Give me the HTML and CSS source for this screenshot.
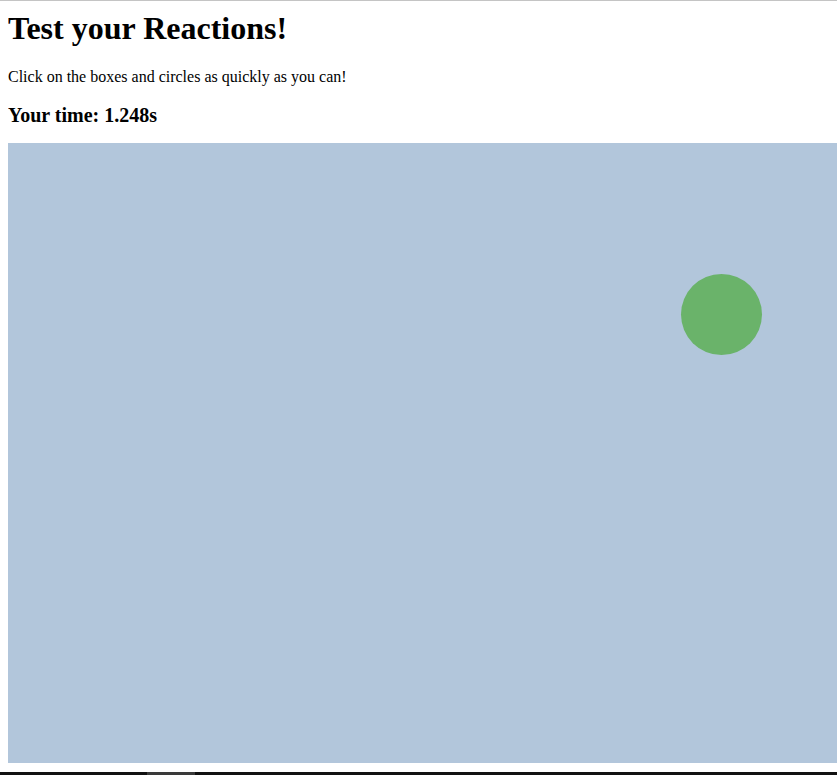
FILE: index.html
```html
<!DOCTYPE html>
<html>
<head>
<meta charset="utf-8">
<title>Test your Reactions!</title>
<link rel="stylesheet" href="styles.css">
</head>
<body>
<h1 class="title">Test your Reactions!</h1>
<p class="intro">Click on the boxes and circles as quickly as you can!</p>
<h3 class="time">Your time: <span class="time-value">1.248s</span></h3>
<div class="game-area">
  <div class="shape shape-circle" style="left: 673px; top: 131px;"></div>
</div>
<div class="bottom-bar"><div class="bottom-thumb"></div></div>
</body>
</html>
```
FILE: styles.css
```css
html {
  border-top: 1px solid #c4c4c4;
  background: #ffffff;
}
body {
  margin: 9px 0 8px 8px;
  font-family: "Liberation Serif", "Times New Roman", serif;
  color: #000;
}
.title {
  font-size: 32px;
  font-weight: bold;
  margin: 0 0 21px 0;
}
.intro {
  font-size: 16px;
  margin: 16px 0;
}
.time {
  font-size: 20px;
  font-weight: bold;
  margin: 18px 0 16px 0;
}
.game-area {
  position: relative;
  height: 620px;
  background: #b2c6db;
}
.shape {
  position: absolute;
  width: 81px;
  height: 81px;
  background: #6ab36a;
}
.shape-circle {
  border-radius: 50%;
}
.bottom-bar {
  position: fixed;
  left: 0;
  right: 0;
  bottom: 0;
  height: 3px;
  background: #111111;
}
.bottom-thumb {
  position: absolute;
  left: 147px;
  width: 48px;
  top: 0;
  bottom: 0;
  background: #3a3a3a;
}
```
